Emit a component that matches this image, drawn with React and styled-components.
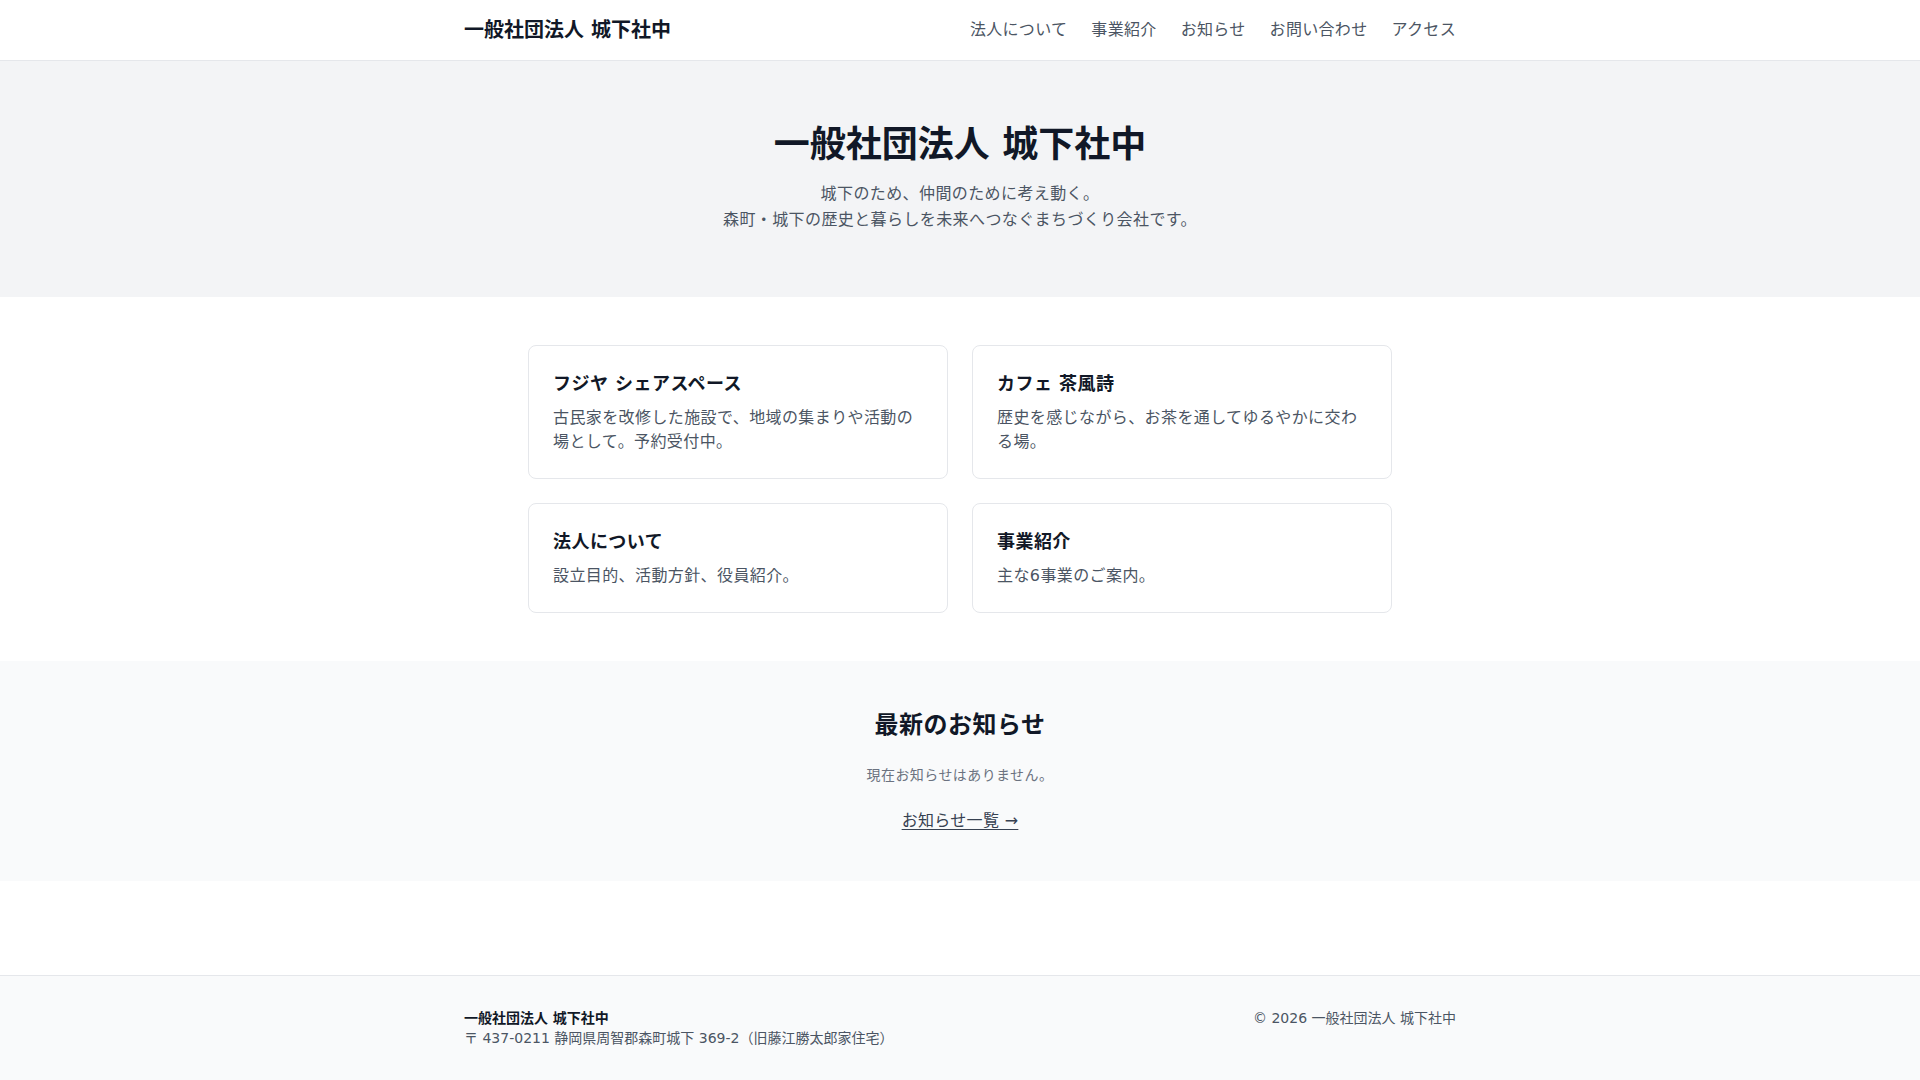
import React from "react";
import styled, { createGlobalStyle } from "styled-components";

const GlobalStyle = createGlobalStyle`
  * { box-sizing: border-box; }
  html, body { margin: 0; padding: 0; }
  body {
    font-family: "DejaVu Sans", "Noto Sans CJK JP", sans-serif;
    color: #111827;
    background: #ffffff;
  }
  h1, h2, h3, p { margin: 0; }
`;

const Page = styled.div`
  min-height: 100vh;
  display: flex;
  flex-direction: column;
`;

const Header = styled.header`
  background: #ffffff;
  border-bottom: 1px solid #e5e7eb;
`;

const Container = styled.div`
  max-width: ${(p) => p.$max || 1024}px;
  margin: 0 auto;
  padding: 0 16px;
  width: 100%;
`;

const HeaderInner = styled(Container)`
  display: flex;
  align-items: center;
  justify-content: space-between;
  padding-top: 16px;
  padding-bottom: 16px;
`;

const Logo = styled.a`
  font-size: 20px;
  line-height: 28px;
  font-weight: 700;
  color: #111827;
  text-decoration: none;
`;

const Nav = styled.nav`
  display: flex;
  gap: 24px;
`;

const NavLink = styled.a`
  font-size: 16px;
  line-height: 24px;
  letter-spacing: 0.02em;
  color: #4b5563;
  text-decoration: none;
`;

const Main = styled.main`
  flex: 1;
`;

const Hero = styled.section`
  background: #f3f4f6;
  padding: 64px 0;
  text-align: center;
`;

const HeroTitle = styled.h1`
  font-size: 36px;
  line-height: 40px;
  font-weight: 700;
  color: #111827;
`;

const HeroText = styled.p`
  margin-top: 16px;
  font-size: 16px;
  line-height: 26px;
  letter-spacing: 0.025em;
  color: #4b5563;
`;

const CardSection = styled.section`
  padding: 48px 0;
`;

const CardGrid = styled.div`
  display: grid;
  grid-template-columns: 1fr 1fr;
  gap: 24px;
`;

const Card = styled.a`
  display: block;
  border: 1px solid #e5e7eb;
  border-radius: 8px;
  padding: 24px;
  background: #ffffff;
  text-decoration: none;
`;

const CardTitle = styled.h3`
  font-size: 18px;
  line-height: 28px;
  font-weight: 700;
  letter-spacing: 0.025em;
  color: #111827;
`;

const CardText = styled.p`
  margin-top: 8px;
  font-size: 16px;
  line-height: 24px;
  letter-spacing: 0.025em;
  color: #4b5563;
`;

const News = styled.section`
  background: #f9fafb;
  padding: 48px 0;
  text-align: center;
`;

const NewsTitle = styled.h2`
  font-size: 24px;
  line-height: 32px;
  font-weight: 700;
  letter-spacing: 0.02em;
  color: #111827;
`;

const NewsEmpty = styled.p`
  margin-top: 24px;
  font-size: 14px;
  line-height: 20px;
  letter-spacing: 0.03em;
  color: #6b7280;
`;

const NewsLink = styled.a`
  display: inline-block;
  margin-top: 24px;
  font-size: 16px;
  line-height: 24px;
  letter-spacing: 0.02em;
  color: #374151;
  text-decoration: underline;
  text-underline-offset: 3px;
`;

const Footer = styled.footer`
  border-top: 1px solid #e5e7eb;
  background: #f9fafb;
  padding: 32px 0;
`;

const FooterInner = styled(Container)`
  display: flex;
  justify-content: space-between;
  align-items: flex-start;
  font-size: 14px;
  line-height: 20px;
  color: #4b5563;
`;

const FooterName = styled.p`
  font-weight: 700;
  color: #111827;
`;

const cards = [
  {
    title: "フジヤ シェアスペース",
    text: "古民家を改修した施設で、地域の集まりや活動の場として。予約受付中。",
  },
  {
    title: "カフェ 茶風詩",
    text: "歴史を感じながら、お茶を通してゆるやかに交わる場。",
  },
  { title: "法人について", text: "設立目的、活動方針、役員紹介。" },
  { title: "事業紹介", text: "主な6事業のご案内。" },
];

const navItems = ["法人について", "事業紹介", "お知らせ", "お問い合わせ", "アクセス"];

export default function App() {
  return (
    <Page>
      <GlobalStyle />
      <Header>
        <HeaderInner>
          <Logo href="#">一般社団法人 城下社中</Logo>
          <Nav>
            {navItems.map((item) => (
              <NavLink key={item} href="#">
                {item}
              </NavLink>
            ))}
          </Nav>
        </HeaderInner>
      </Header>

      <Main>
        <Hero>
          <Container>
            <HeroTitle>一般社団法人 城下社中</HeroTitle>
            <HeroText>
              城下のため、仲間のために考え動く。
              <br />
              森町・城下の歴史と暮らしを未来へつなぐまちづくり会社です。
            </HeroText>
          </Container>
        </Hero>

        <CardSection>
          <Container $max={896}>
            <CardGrid>
              {cards.map((card) => (
                <Card key={card.title} href="#">
                  <CardTitle>{card.title}</CardTitle>
                  <CardText>{card.text}</CardText>
                </Card>
              ))}
            </CardGrid>
          </Container>
        </CardSection>

        <News>
          <Container>
            <NewsTitle>最新のお知らせ</NewsTitle>
            <NewsEmpty>現在お知らせはありません。</NewsEmpty>
            <NewsLink href="#">お知らせ一覧 →</NewsLink>
          </Container>
        </News>
      </Main>

      <Footer>
        <FooterInner>
          <div>
            <FooterName>一般社団法人 城下社中</FooterName>
            <p>〒 437-0211 静岡県周智郡森町城下 369-2（旧藤江勝太郎家住宅）</p>
          </div>
          <p>© 2026 一般社団法人 城下社中</p>
        </FooterInner>
      </Footer>
    </Page>
  );
}
